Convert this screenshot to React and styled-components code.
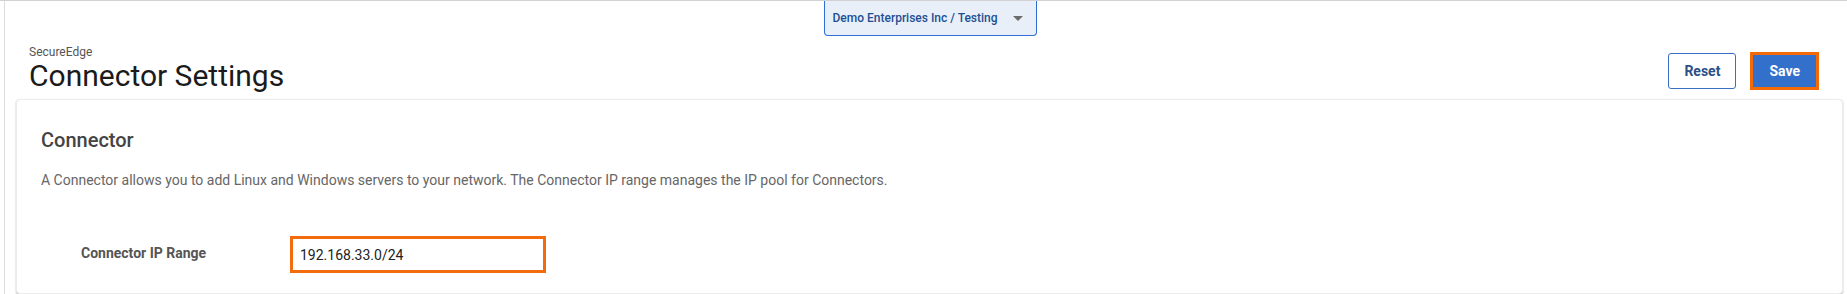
import styled, { createGlobalStyle } from "styled-components";

const GlobalStyle = createGlobalStyle`
  html, body {
    margin: 0;
    padding: 0;
    background: #ffffff;
    font-family: Roboto, "Liberation Sans", Arial, sans-serif;
  }
`;

const Page = styled.div`
  border-top: 1px solid #d2d2d2;
  height: 293px;
  overflow: hidden;
`;

const Frame = styled.div`
  margin-left: 4px;
  border-left: 1px solid #dcdcdc;
  height: 100%;
  display: flex;
  flex-direction: column;
`;

const TopBar = styled.div`
  display: flex;
  justify-content: center;
  padding-left: 8px;
`;

const TenantSelect = styled.button`
  width: 213px;
  height: 35px;
  display: flex;
  align-items: center;
  justify-content: space-between;
  padding: 0 13px 0 8px;
  background: #e9eff9;
  border: 1px solid #2f6fd4;
  border-top: none;
  border-radius: 0 0 4px 4px;
  color: #1e4f94;
  font-family: Roboto, "Liberation Sans", Arial, sans-serif;
  font-size: 12px;
  font-weight: 500;
  cursor: pointer;
`;

const Caret = styled.span`
  width: 0;
  height: 0;
  border-left: 5px solid transparent;
  border-right: 5px solid transparent;
  border-top: 5px solid #6b6b6b;
  margin-top: 1px;
`;

const Header = styled.div`
  display: flex;
  align-items: center;
  justify-content: space-between;
  padding: 10px 28px 0 24px;
`;

const TitleBlock = styled.div`
  display: flex;
  flex-direction: column;
`;

const Crumb = styled.div`
  font-size: 12px;
  line-height: 13px;
  color: #555;
`;

const Title = styled.h1`
  margin: 0;
  font-size: 30px;
  line-height: 34px;
  font-weight: 400;
  color: #1b1b1b;
`;

const Actions = styled.div`
  display: flex;
  align-items: center;
  gap: 14px;
  margin-top: 2px;
`;

const Button = styled.button`
  height: ${(p) => (p.$primary ? "38px" : "36px")};
  padding: 0 ${(p) => (p.$primary ? "16px" : "15px")};
  border-radius: ${(p) => (p.$primary ? "0" : "3px")};
  border: ${(p) => (p.$primary ? "3px solid #f46a06" : "1px solid #3a70c4")};
  background: ${(p) => (p.$primary ? "#3370cc" : "#ffffff")};
  color: ${(p) => (p.$primary ? "#ffffff" : "#2c4f86")};
  font-family: Roboto, "Liberation Sans", Arial, sans-serif;
  font-size: 14px;
  font-weight: 700;
  cursor: pointer;
`;

const Card = styled.section`
  margin: 6px 4px 0 11px;
  padding: 28px 24px 20px 24px;
  border: 1px solid #ececec;
  border-radius: 4px;
  box-shadow: 0 1px 2px rgba(0, 0, 0, 0.28);
  background: #fff;
`;

const CardTitle = styled.h2`
  margin: 0;
  font-size: 20px;
  line-height: 24px;
  font-weight: 500;
  color: #444;
`;

const Description = styled.p`
  margin: 18px 0 0;
  font-size: 14px;
  line-height: 20px;
  color: #666;
`;

const FieldRow = styled.div`
  display: flex;
  align-items: center;
  margin-top: 43px;
`;

const FieldLabel = styled.label`
  width: 249px;
  padding-left: 40px;
  box-sizing: border-box;
  font-size: 14px;
  font-weight: 700;
  color: #555;
`;

const TextInput = styled.input`
  width: 256px;
  height: 37px;
  box-sizing: border-box;
  border: 3px solid #f26b0c;
  padding: 0 7px;
  margin-top: 3px;
  font-family: Roboto, "Liberation Sans", Arial, sans-serif;
  font-size: 14px;
  color: #222;
  outline: none;
`;

const App = () => {
  return (
    <Page>
      <GlobalStyle />
      <Frame>
        <TopBar>
          <TenantSelect>
            Demo Enterprises Inc / Testing
            <Caret />
          </TenantSelect>
        </TopBar>
        <Header>
          <TitleBlock>
            <Crumb>SecureEdge</Crumb>
            <Title>Connector Settings</Title>
          </TitleBlock>
          <Actions>
            <Button>Reset</Button>
            <Button $primary>Save</Button>
          </Actions>
        </Header>
        <Card>
          <CardTitle>Connector</CardTitle>
          <Description>
            A Connector allows you to add Linux and Windows servers to your network. The Connector IP range manages the IP pool for Connectors.
          </Description>
          <FieldRow>
            <FieldLabel htmlFor="ip-range">Connector IP Range</FieldLabel>
            <TextInput id="ip-range" defaultValue="192.168.33.0/24" />
          </FieldRow>
        </Card>
      </Frame>
    </Page>
  );
};

export default App;
